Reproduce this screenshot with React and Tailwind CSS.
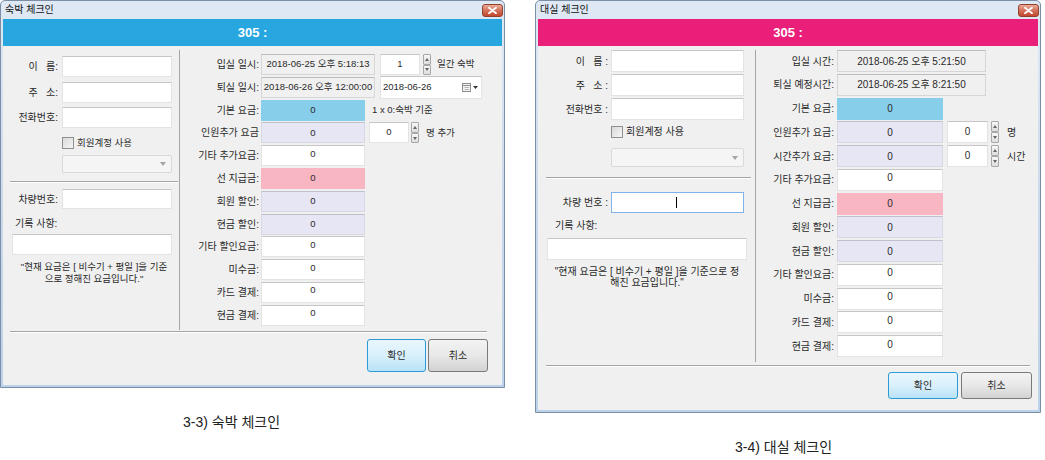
import React from "react";

// shared look of the old win7 dialogs
const tones = {
  gray: "bg-[#f0f0f0] border border-[#d6d6d6] border-t-[#bdbdbd]",
  white: "bg-white border border-[#e3e3e3] border-t-[#c6c6c6] pb-[4px]",
  blue: "bg-[#87ceeb] border border-[#87ceeb]",
  lav: "bg-[#e6e6f5] border border-[#d8d8e2] border-t-[#c0c0cc]",
  pink: "bg-[#f8b5c2] border border-[#f8b5c2]",
};

const Field = ({ tone = "white", w, children = "0" }) => (
  <div className={`flex h-full shrink-0 items-center justify-center ${tones[tone]} ${w}`}>
    {children}
  </div>
);

const CloseBtn = () => (
  <div className="flex h-[13px] w-[21px] items-center justify-center rounded-[3px] border border-[#93412f] bg-linear-to-b from-[#e9ad9a] via-[#d3715b] to-[#c3472d]">
    <svg width="9" height="7" viewBox="0 0 9 7">
      <path d="M1 0.8 L8 6.2 M8 0.8 L1 6.2" stroke="white" strokeWidth="1.8" strokeLinecap="round" />
    </svg>
  </div>
);

const TitleBar = ({ title }) => (
  <div className="flex h-[18px] items-start justify-between pl-[4px] pr-[1px]">
    <span className="pt-[3px] text-[10px] leading-[12px] text-[#111]">{title}</span>
    <div className="pt-[3px]">
      <CloseBtn />
    </div>
  </div>
);

const Spin = ({ h }) => (
  <div className={`flex w-[8px] shrink-0 flex-col ${h}`}>
    <div className="flex flex-1 items-center justify-center rounded-[1px] border border-[#a8a8a8] bg-linear-to-b from-[#f7f7f7] to-[#dedede]">
      <svg width="4" height="3" viewBox="0 0 4 3">
        <path d="M0 3 L2 0 L4 3Z" fill="#666" />
      </svg>
    </div>
    <div className="flex flex-1 items-center justify-center rounded-[1px] border border-[#a8a8a8] bg-linear-to-b from-[#f7f7f7] to-[#dedede]">
      <svg width="4" height="3" viewBox="0 0 4 3">
        <path d="M0 0 L2 3 L4 0Z" fill="#666" />
      </svg>
    </div>
  </div>
);

const SpinBox = ({ value, w, h }) => (
  <div className={`flex shrink-0 justify-center border border-[#e3e3e3] border-t-[#c6c6c6] bg-white pt-[2px] ${w} ${h}`}>
    {value}
  </div>
);

const CheckRow = () => (
  <div className="flex items-center">
    <span className="h-[12px] w-[12px] border border-[#909090] bg-linear-to-br from-[#d8d8d8] to-[#f6f6f6]" />
    <span className="ml-[3px]">회원계정 사용</span>
  </div>
);

const Combo = ({ w, h }) => (
  <div className={`flex items-center justify-end rounded-[2px] border border-[#d9d9d9] bg-[#f5f5f5] pr-[5px] ${w} ${h}`}>
    <svg width="6" height="4" viewBox="0 0 6 4">
      <path d="M0 0 L3 4 L6 0Z" fill="#a5a5a5" />
    </svg>
  </div>
);

const Button = ({ primary, w, h, children }) => (
  <div
    className={`flex items-center justify-center rounded-[3px] border ${w} ${h} ${
      primary
        ? "border-[#2c9ad6] bg-linear-to-b from-[#eaf6fd] via-[#d9f0fc] to-[#b9e2f7]"
        : "border-[#7a7a7a] bg-linear-to-b from-[#f3f3f3] via-[#e8e8e8] to-[#d2d2d2]"
    }`}
  >
    {children}
  </div>
);

const Etched = ({ className }) => (
  <div className={`h-[2px] border-t border-b border-t-[#a5a5a5] border-b-white ${className}`} />
);

const lodgeRows = [
  { label: "입실 일시:", tone: "gray", value: "2018-06-25 오후 5:18:13", w: "w-[114px]", extra: "stay" },
  { label: "퇴실 일시:", tone: "gray", value: "2018-06-26 오후 12:00:00", w: "w-[114px]", extra: "date" },
  { label: "기본 요금:", tone: "blue", extra: "basis" },
  { label: "인원추가 요금", tone: "lav", extra: "people" },
  { label: "기타 추가요금:" },
  { label: "선 지급금:", tone: "pink" },
  { label: "회원 할인:", tone: "lav" },
  { label: "현금 할인:", tone: "lav" },
  { label: "기타 할인요금:" },
  { label: "미수금:" },
  { label: "카드 결제:" },
  { label: "현금 결제:" },
];

const rentRows = [
  { label: "입실 시간:", tone: "gray", value: "2018-06-25 오후 5:21:50", w: "w-[149px]" },
  { label: "퇴실 예정시간:", tone: "gray", value: "2018-06-25 오후 8:21:50", w: "w-[149px]" },
  { label: "기본 요금:", tone: "blue" },
  { label: "인원추가 요금:", tone: "lav", unit: "명" },
  { label: "시간추가 요금:", tone: "lav", unit: "시간" },
  { label: "기타 추가요금:" },
  { label: "선 지급금:", tone: "pink" },
  { label: "회원 할인:", tone: "lav" },
  { label: "현금 할인:", tone: "lav" },
  { label: "기타 할인요금:" },
  { label: "미수금:" },
  { label: "카드 결제:" },
  { label: "현금 결제:" },
];

const LodgeExtra = ({ kind }) => {
  if (kind === "stay")
    return (
      <>
        <div className="ml-[5px] h-full">
          <SpinBox value="1" w="w-[40px]" h="h-full" />
        </div>
        <div className="ml-[3px] h-full">
          <Spin h="h-full" />
        </div>
        <span className="ml-[6px]">일간 숙박</span>
      </>
    );
  if (kind === "date")
    return (
      <div className="-my-[1px] ml-[5px] flex h-[23px] w-[102px] items-center justify-between border border-[#e3e3e3] border-t-[#c6c6c6] bg-white pl-[2px] pr-[3px]">
        <span>2018-06-26</span>
        <span className="flex items-center gap-[1px]">
          <svg width="10" height="10" viewBox="0 0 10 10">
            <rect x="0.5" y="1.5" width="8" height="8" fill="#f4f4f4" stroke="#8c8c8c" />
            <path d="M1 3.5 H8.5" stroke="#8c8c8c" />
            <path d="M2.5 5.5 H7 M2.5 7.5 H7" stroke="#b5b5b5" />
          </svg>
          <svg width="5" height="3" viewBox="0 0 5 3">
            <path d="M0 0 L2.5 3 L5 0Z" fill="#333" />
          </svg>
        </span>
      </div>
    );
  if (kind === "basis") return <span className="ml-[7px]">1 x 0:숙박 기준</span>;
  if (kind === "people")
    return (
      <>
        <div className="ml-[4px] h-full">
          <SpinBox value="0" w="w-[40px]" h="h-full" />
        </div>
        <div className="ml-[2px] h-full">
          <Spin h="h-full" />
        </div>
        <span className="ml-[7px]">명 추가</span>
      </>
    );
  return null;
};

const LodgeDialog = () => (
  <div className="flex h-[388px] w-[505px] flex-col rounded-t-[5px] border border-[#7b8ea6] bg-linear-to-b from-[#dfe9f5] via-[#cbdaed] to-[#bcd2ea]">
    <TitleBar title="숙박 체크인" />
    <div className="mx-[2px] mb-[2px] flex flex-1 flex-col bg-[#f0f0f0] text-[9.5px] text-[#2a2a2a]">
      <div className="flex h-[27px] items-center justify-center bg-[#27a6df] text-[13px] font-bold text-white">
        305 :
      </div>
      <div className="flex flex-1 flex-col px-[7px]">
        <div className="mt-[4px] flex h-[280px]">
          {/* guest info */}
          <div className="flex w-[170px] shrink-0 flex-col border-r border-[#a5a5a5] pt-[6px]">
            {[
              ["이\u00a0\u00a0\u00a0름:", 0],
              ["주\u00a0\u00a0\u00a0소:", 1],
              ["전화번호:", 2],
            ].map(([l, i]) => (
              <div key={i} className={`flex h-[21px] items-center ${i ? "mt-[4.5px]" : ""}`}>
                <span className="w-[48px] text-right text-[10px]">{l}</span>
                <div className="ml-[4px] h-full w-[110px] border border-[#e3e3e3] border-t-[#c6c6c6] bg-white" />
              </div>
            ))}
            <div className="ml-[52px] mt-[8px]">
              <CheckRow />
            </div>
            <div className="ml-[52px] mt-[5px]">
              <Combo w="w-[110px]" h="h-[18px]" />
            </div>
            <Etched className="mt-[8px] w-[168px]" />
            <div className="mt-[6px] flex h-[20px] items-center">
              <span className="w-[48px] text-right text-[10px]">차량번호:</span>
              <div className="ml-[4px] h-full w-[110px] border border-[#e3e3e3] border-t-[#c6c6c6] bg-white" />
            </div>
            <div className="mt-[9px] h-[12px] pl-[5px] text-[10px] leading-[12px]">기록 사항:</div>
            <div className="ml-[2px] mt-[4px] h-[21px] w-[160px] border border-[#e3e3e3] border-t-[#c6c6c6] bg-white" />
            <div className="mt-[6px] w-[168px] text-center leading-[11.5px]">
              "현재 요금은 [ 비수기 + 평일 ]을 기준
              <br />
              으로 정해진 요금입니다."
            </div>
          </div>
          {/* charges */}
          <div className="flex flex-col gap-[1.8px] pt-[4px]">
            {lodgeRows.map((r) => (
              <div key={r.label} className="flex h-[21px] items-center">
                <span className="w-[79px] text-right text-[10px]">{r.label}</span>
                <div className="ml-[2px] flex h-full items-center">
                  <Field tone={r.tone} w={r.w || "w-[104px]"}>
                    {r.value || "0"}
                  </Field>
                  {r.extra && <LodgeExtra kind={r.extra} />}
                </div>
              </div>
            ))}
          </div>
        </div>
        <Etched className="mr-[8px] mt-[1px]" />
        <div className="mr-[7px] mt-[6px] flex justify-end gap-[2px] text-[10px]">
          <Button primary w="w-[59px]" h="h-[33px]">
            확인
          </Button>
          <Button w="w-[60px]" h="h-[33px]">
            취소
          </Button>
        </div>
      </div>
    </div>
  </div>
);

const RentDialog = () => (
  <div className="flex h-[413px] w-[506px] flex-col rounded-t-[5px] border border-[#7b8ea6] bg-linear-to-b from-[#dfe9f5] via-[#cbdaed] to-[#bcd2ea]">
    <TitleBar title="대실 체크인" />
    <div className="mx-[2px] mb-[2px] flex flex-1 flex-col bg-[#f0f0f0] text-[10px] text-[#2a2a2a]">
      <div className="flex h-[27px] items-center justify-center bg-[#ea1f7a] text-[13px] font-bold text-white">
        305 :
      </div>
      <div className="flex flex-1 flex-col pl-[8px]">
        <div className="mt-[4px] flex h-[312px]">
          {/* guest info */}
          <div className="flex w-[210px] shrink-0 flex-col border-r border-[#a5a5a5]">
            {[
              ["이\u00a0\u00a0\u00a0름 :", 0],
              ["주\u00a0\u00a0\u00a0소 :", 1],
              ["전화번호 :", 2],
            ].map(([l, i]) => (
              <div key={i} className={`flex h-[22px] items-center ${i ? "mt-[2px]" : ""}`}>
                <span className="w-[62px] text-right">{l}</span>
                <div className="ml-[3px] h-full w-[133px] border border-[#e3e3e3] border-t-[#c6c6c6] bg-white" />
              </div>
            ))}
            <div className="ml-[65px] mt-[4px]">
              <CheckRow />
            </div>
            <div className="ml-[65px] mt-[9px]">
              <Combo w="w-[133px]" h="h-[19px]" />
            </div>
            <Etched className="mt-[10px] w-[205px]" />
            <div className="mt-[13px] flex h-[21px] items-center">
              <span className="w-[62px] text-right">차량 번호 :</span>
              <div className="ml-[3px] flex h-full w-[133px] items-center border border-[#7eb4ea] bg-white pl-[64px]">
                <span className="h-[11px] w-px bg-black" />
              </div>
            </div>
            <div className="mt-[7px] h-[12px] pl-[9px] leading-[12px]">기록 사항:</div>
            <div className="ml-[1px] mt-[6px] h-[22px] w-[200px] border border-[#e3e3e3] border-t-[#c6c6c6] bg-white" />
            <div className="mt-[6px] w-[202px] text-center leading-[11px]">
              "현재 요금은 [ 비수기 + 평일 ]을 기준으로 정
              <br />
              해진 요금입니다."
            </div>
          </div>
          {/* charges */}
          <div className="flex flex-col gap-[1.75px]">
            {rentRows.map((r) => (
              <div key={r.label} className="flex h-[22px] items-center">
                <span className="w-[78px] text-right">{r.label}</span>
                <div className="ml-[3px] flex h-full items-center">
                  <Field tone={r.tone} w={r.w || "w-[106px]"}>
                    {r.value || "0"}
                  </Field>
                  {r.unit && (
                    <>
                      <div className="ml-[4px] h-full">
                        <SpinBox value="0" w="w-[41px]" h="h-full" />
                      </div>
                      <div className="ml-[3px] h-full">
                        <Spin h="h-full" />
                      </div>
                      <span className="ml-[8px]">{r.unit}</span>
                    </>
                  )}
                </div>
              </div>
            ))}
          </div>
        </div>
        <Etched className="mr-[8px] mt-[3px]" />
        <div className="mr-[6px] mt-[5px] flex justify-end gap-[3px]">
          <Button primary w="w-[70px]" h="h-[27px]">
            확인
          </Button>
          <Button w="w-[71px]" h="h-[27px]">
            취소
          </Button>
        </div>
      </div>
    </div>
  </div>
);

export default function App() {
  return (
    <div className="flex h-[460px] w-[1045px] items-start bg-white [font-family:'Liberation_Sans','Noto_Sans_CJK_KR',sans-serif]">
      <div className="flex w-[505px] flex-col">
        <LodgeDialog />
        <div className="mt-[25px] h-[18px] pl-[183px] text-[14px] leading-[18px] text-[#222]">
          3-3) 숙박 체크인
        </div>
      </div>
      <div className="ml-[30px] flex w-[506px] flex-col">
        <RentDialog />
        <div className="mt-[25px] h-[18px] pl-[200px] text-[14px] leading-[18px] text-[#222]">
          3-4) 대실 체크인
        </div>
      </div>
    </div>
  );
}
